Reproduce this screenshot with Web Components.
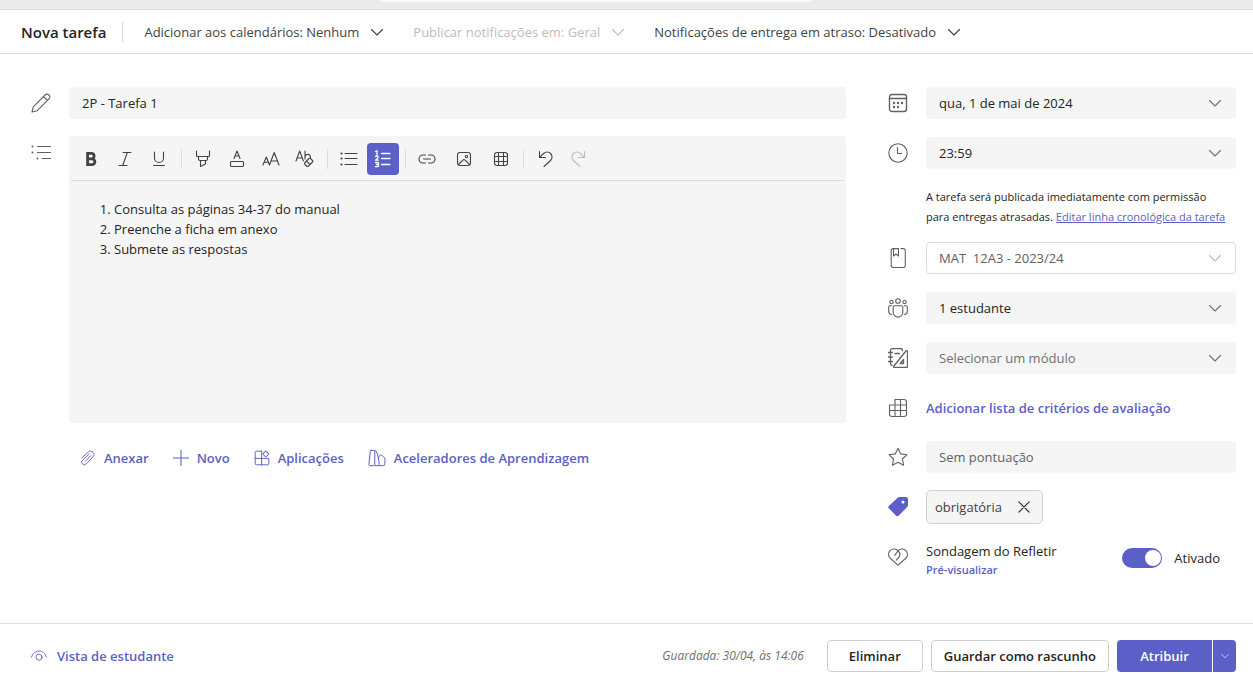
<!DOCTYPE html>
<html lang="pt">
<head>
<meta charset="utf-8">
<title>Nova tarefa</title>
<style>
  :root {
    --brand: #5b5fc7;
    --text: #242424;
    --text-2: #424242;
    --text-3: #616161;
    --disabled: #bdbdbd;
    --fill: #f5f5f5;
    --line: #dcdcdc;
    --font: "Open Sans", "Noto Sans", sans-serif;
  }
  body { margin: 0; background: #fff; color: var(--text); font: 13px/20px var(--font); }
</style>
</head>
<body>
<task-page></task-page>

<script>
const ICONS = {
  pencil: '<path d="M1 19l1.3-5.2L14.1 2a2.7 2.7 0 0 1 3.9 0 2.7 2.7 0 0 1 0 3.9L6.2 17.7z M12.6 3.5l3.9 3.9"/>',
  bullets: '<path d="M6.5 4.5h13M6.5 10.5h13M11 16.5h8.5"/><g fill="currentColor" stroke="none"><circle cx="1.5" cy="4.5" r="1"/><circle cx="1.5" cy="10.5" r="1"/><circle cx="6.5" cy="16.5" r="1"/></g>',
  calendar: '<rect x="1.5" y="1.5" width="17" height="17" rx="2.5" stroke-width="1.4"/><path d="M1.5 5.5h17" stroke-width="1.4"/><g fill="currentColor" stroke="none"><circle cx="6" cy="10" r="1.2"/><circle cx="10" cy="10" r="1.2"/><circle cx="14" cy="10" r="1.2"/><circle cx="6" cy="14" r="1.2"/><circle cx="10" cy="14" r="1.2"/></g>',
  clock: '<circle cx="10" cy="10" r="9.2"/><path d="M9.5 4.5v6h4"/>',
  book: '<path d="M5.5.6h-.3a2 2 0 0 0-2 2v14.9a2 2 0 0 0 2 2h10.1a2 2 0 0 0 2-2V2.6a2 2 0 0 0-2-2H13M5.5.6h5v7.4L8 6 5.500 8z"/>',
  people: '<circle cx="10" cy="3" r="2.3"/><circle cx="3.5" cy="4" r="1.7"/><circle cx="16.5" cy="4" r="1.7"/><path d="M6.2 7.8h7.6a1 1 0 0 1 1 1v5.5a4.8 4.8 0 0 1-9.6 0V8.8a1 1 0 0 1 1-1zM3.5 7.8H1.700a1 1 0 0 0-1 1v4.400a3.300 3.300 0 0 0 3 3.300M16.500 7.800h1.800a1 1 0 0 1 1 1v4.400a3.300 3.300 0 0 1-3 3.300"/>',
  module: '<path stroke-width="1.300" d="M14.500 2.700V2.500a2 2 0 0 0-2-2H4.500a2 2 0 0 0-2 2v13a2 2 0 0 0 1.500 1.900M.5 4.500h4M.5 9h4M.5 13.500h4M7 5.500h4.500M19.500 3.500v15a1 1 0 0 1-1 1h-12c-.9 0-1.200-.8-.6-1.500l12-15c.6-.6 1.600-.3 1.600.5zM15.500 11.500v4h-3.200z"/>',
  rubric: '<path d="M7 1.500h9a2.500 2.500 0 0 1 2.500 2.500v12a2.500 2.500 0 0 1-2.500 2.500H4A2.500 2.500 0 0 1 1.500 16V7h17M7 18.500v-17M12.500 1.500v17M1.500 12.500h17"/>',
  star: '<path d="M10 1.200l2.700 5.700 6.300.8-4.600 4.300 1.200 6.200-5.600-3-5.600 3 1.200-6.200L1 7.700l6.300-.8z"/>',
  tag: '<path fill="currentColor" stroke="none" fill-rule="evenodd" d="M11.500 0H18a2 2 0 0 1 2 2v6.300a2 2 0 0 1-.6 1.500l-8.600 8.600a2 2 0 0 1-2.900 0L1 11.600a2 2 0 0 1 0-2.900L10 .6a2 2 0 0 1 1.500-.6zM15 3.600a1.500 1.500 0 1 0 0 3 1.500 1.500 0 0 0 0-3z"/>',
  reflect: '<path d="M10.200 3.900C8.500 1.600 4.600 1.300 2.300 3.400A5.400 5.400 0 0 0 2 11l7.300 6.600a1 1 0 0 0 1.400 0L18 11a5.400 5.400 0 0 0-.4-7.700C15.300 1.300 11.700 1.700 9.800 4.200L6.700 8.300M10.200 3.900c2 2.100 2 4.900.4 6.700l-2.400 2.600"/>',
  chevron: '<path d="M4.500 7.500l5.500 5.500 5.500-5.500"/>',
  bold: '<path stroke-width="2.800" stroke-linejoin="miter" d="M6.600 4.400h3.800a2.700 2.700 0 0 1 0 5.400H6.600zM6.600 9.800h4.400a2.900 2.900 0 0 1 0 5.800H6.600z"/>',
  italic: '<path d="M8 3.500h8M4 16.500h8M12.300 3.500l-4.600 13"/>',
  underline: '<path d="M5.500 3v6a4.500 4.500 0 0 0 9 0V3M4.500 16.500h11"/>',
  highlight: '<path d="M3.500 2v4.500a1 1 0 0 0 1 1h11a1 1 0 0 0 1-1V2M5.500 7.500v2.500a1.500 1.500 0 0 0 1.500 1.500h6a1.500 1.500 0 0 0 1.500-1.500v-2.500M7.500 11.500v6l5-2.500v-3.500"/>',
  color: '<path d="M7 9.500l3-7.500 3 7.500M8 7h4"/><rect x="3.500" y="12.500" width="13" height="5" rx="1"/>',
  size: '<path d="M2 16l3.300-8 3.200 8M3.200 13.300h4.200M8.500 16l4.700-12.500L18 16M10 12h6.500"/>',
  clear: '<path d="M1 12L4.700 2l3.700 10M2.300 9h4.800M10 2v8M10 8a2.800 2.800 0 0 1 5-1.500c.4.600.5 1 .5 1.700M10 13.500l4-4a1 1 0 0 1 1.500 0l2 2a1 1 0 0 1 0 1.500l-4 4a1.500 1.500 0 0 1-2 0L10 15.500a1.400 1.400 0 0 1 0-2zM11.500 12l3.700 3.700"/>',
  list: '<path d="M6 4.500h12M6 9.500h12M6 15.500h12"/><g fill="currentColor" stroke="none"><circle cx="2.500" cy="4.500" r="1.100"/><circle cx="2.500" cy="9.500" r="1.100"/><circle cx="2.500" cy="15.500" r="1.100"/></g>',
  numbers: '<path d="M8.500 4.500H17M8.500 9.500H17M8.500 15.500H17" stroke-width="1.300"/><path stroke-width="1.300" d="M2.500 2.500l1.500-.8v4M2.500 7.500c.6-.8 2.700-.7 2.700.6 0 1-1.500 1.700-2.700 3h3M2.500 13.500h2.200c1.300 0 1.300 2 0 2H3.500M4.700 15.500c1.300 0 1.300 2.200 0 2.200H2.500"/>',
  link: '<path d="M8.500 6H6a4 4 0 0 0 0 8h2.500M11.500 6H14a4 4 0 0 1 0 8h-2.500M6.500 10h7"/>',
  image: '<rect x="3.500" y="3.500" width="13" height="13" rx="2.500"/><path d="M4.500 15.500l4.700-4.600a1.200 1.200 0 0 1 1.600 0l4.700 4.600"/><circle cx="12.500" cy="7.500" r="1.200"/>',
  table: '<rect x="3.500" y="3.500" width="13" height="13" rx="2.500"/><path d="M3.500 7.500h13M3.500 12.500h13M7.500 3.500v13M12.500 3.500v13"/>',
  undo: '<path d="M4.500 2.500v6h6M4.700 8.300l3.900-3.800a5 5 0 0 1 7 0 5 5 0 0 1 0 7L9 17.500"/>',
  redo: '<path d="M15.500 2.500v6h-6M15.300 8.300l-3.900-3.800a5 5 0 0 0-7 0 5 5 0 0 0 0 7l6.600 6"/>',
  clip: '<path d="M2 10l8.300-7.300a4 4 0 0 1 6 0 4 4 0 0 1 0 5.800l-8.600 9a3.200 3.200 0 0 1-4.600 0 3.200 3.200 0 0 1 0-4.600l8.500-8"/><path d="M13.500 7l-7 7.300"/>',
  plus: '<path d="M10 .5v19M.5 10h19" stroke-width="1.300"/>',
  apps: '<path d="M9.500 1.500H3A1.500 1.500 0 0 0 1.500 3v14A1.500 1.500 0 0 0 3 18.500h14a1.500 1.500 0 0 0 1.500-1.500v-6.500H1.500M9.500 1.500v17" stroke-width="1.200"/><rect x="12" y="2.200" width="5.500" height="5.500" rx="1" transform="rotate(45 14.750 4.950)" stroke-width="1.200"/>',
  learn: '<path d="M3.500 1.500h3a1 1 0 0 1 1 1v15a1 1 0 0 1-1 1H2a1 1 0 0 1-1-1.100l1.500-14.900a1 1 0 0 1 1-1zM7.500 2a1 1 0 0 1 1.400.2c2 3 3.100 9 3.500 15.200a1 1 0 0 1-1 1.100H8M12 18.500h5.500a1 1 0 0 0 1-1c.5-4 .5-6.500 0-7.600-.6-1.300-1.400-1.500-3.500-2.900a1.500 1.500 0 0 0-2.200.4c-.6 1-1 2.100-1.300 3.600"/>',
  eye: '<path d="M.6 11.500C2 6.700 5.500 3.800 10 3.800s8 2.900 9.400 7.700"/><circle cx="10" cy="11.500" r="3.800"/>',
  close: '<path d="M3.500 3.500l13 13M16.500 3.500l-13 13" stroke-width="1.400"/>'
};

function define(name, html, setup) {
  const tpl = document.createElement('template');
  tpl.innerHTML = '<style>*{box-sizing:border-box}button,input,select{font:inherit;color:inherit;margin:0}a{color:inherit}</style>' + html;
  customElements.define(name, class extends HTMLElement {
    connectedCallback() {
      if (this.shadowRoot) return;
      const root = this.attachShadow({ mode: 'open' });
      root.append(tpl.content.cloneNode(true));
      if (setup) setup(root, this);
    }
  });
}

define('ui-icon', `
<style>
  :host { display: block; flex: none; width: 20px; height: 20px; }
  :host([size="18"]) { width: 18px; height: 18px; }
  :host([size="16"]) { width: 16px; height: 16px; }
  :host([size="12"]) { width: 12px; height: 12px; }
  svg { display: block; width: 100%; height: 100%; fill: none; stroke: currentColor; stroke-width: 1.100; stroke-linecap: round; stroke-linejoin: round; }
</style>
<svg viewBox="0 0 20 20" aria-hidden="true"></svg>`,
(root, host) => { root.querySelector('svg').innerHTML = ICONS[host.getAttribute('name')]; });

define('menu-button', `
<style>
  :host { display: block; color: var(--text-2); }
  button { display: flex; align-items: center; gap: 8px; padding: 0; border: 0; background: none; height: 32px; white-space: nowrap; }
  button:disabled { color: var(--disabled); }
</style>
<button type="button" aria-haspopup="menu"><slot></slot><ui-icon name="chevron"></ui-icon></button>`,
(root, host) => { root.querySelector('button').disabled = host.hasAttribute('disabled'); });

define('task-header', `
<style>
  :host { display: flex; align-items: center; height: 43px; padding-left: 21px; border-bottom: 1px solid var(--line); }
  h1 { margin: 0; padding-right: 16px; border-right: 1px solid var(--line); font-size: 15px; line-height: 20px; font-weight: 600; white-space: nowrap; }
  nav { display: flex; gap: 26px; margin-left: 21px; }
</style>
<h1>Nova tarefa</h1>
<nav>
  <menu-button>Adicionar aos calendários: Nenhum</menu-button>
  <menu-button disabled>Publicar notificações em: Geral</menu-button>
  <menu-button>Notificações de entrega em atraso: Desativado</menu-button>
</nav>`);

define('form-row', `
<style>
  :host { display: grid; grid-template-columns: 20px minmax(0, 1fr); column-gap: 18px; align-items: center; }
  :host([top]) { align-items: start; }
  .icon { color: var(--text-3); }
  :host([accent]) .icon { color: var(--brand); }
  :host([top]) .icon { padding-top: 6px; }
</style>
<div class="icon"><ui-icon></ui-icon></div>
<slot></slot>`,
(root, host) => {
  const icon = document.createElement('ui-icon');
  icon.setAttribute('name', host.getAttribute('icon'));
  root.querySelector('ui-icon').replaceWith(icon);
});

define('text-field', `
<style>
  :host { display: grid; height: 32px; }
  input, ui-icon { grid-area: 1 / 1; }
  input { width: 100%; height: 32px; padding: 0 40px 0 13px; border: 0; border-radius: 4px; background: var(--fill); outline: 0; }
  input::placeholder { color: var(--text-3); opacity: 1; }
  ui-icon { place-self: center end; margin-right: 11px; color: #707070; pointer-events: none; }
  :host(:not([dropdown])) ui-icon { display: none; }
</style>
<input type="text"><ui-icon name="chevron"></ui-icon>`,
(root, host) => {
  const input = root.querySelector('input');
  input.value = host.getAttribute('value') || '';
  input.placeholder = host.getAttribute('placeholder') || '';
  input.setAttribute('aria-label', host.getAttribute('label'));
});

define('select-field', `
<style>
  :host { display: grid; height: 32px; }
  select, ui-icon { grid-area: 1 / 1; }
  select { appearance: none; width: 100%; height: 32px; padding: 0 40px 0 12px; border: 1px solid transparent; border-radius: 4px; background: var(--fill); outline: 0; }
  ui-icon { place-self: center end; margin-right: 11px; color: #707070; pointer-events: none; }
  :host([muted]) select { color: #707070; }
  select:disabled { background: #fff; border-color: var(--line); color: var(--text-3); opacity: 1; }
  select:disabled + ui-icon { color: var(--disabled); }
</style>
<select><option></option></select><ui-icon name="chevron"></ui-icon>`,
(root, host) => {
  const select = root.querySelector('select');
  select.options[0].textContent = host.getAttribute('value');
  select.setAttribute('aria-label', host.getAttribute('label'));
  select.disabled = host.hasAttribute('disabled');
});

define('tool-button', `
<style>
  :host { display: block; }
  button { display: grid; place-items: center; width: 32px; height: 32px; padding: 0; border: 0; border-radius: 4px; background: none; color: var(--text-2); }
  :host([pressed]) button { background: var(--brand); color: #fff; }
  button:disabled { color: var(--disabled); }
</style>
<button type="button"></button>`,
(root, host) => {
  const button = root.querySelector('button');
  button.setAttribute('aria-label', host.getAttribute('label'));
  button.disabled = host.hasAttribute('disabled');
  const icon = document.createElement('ui-icon');
  icon.setAttribute('name', host.getAttribute('icon'));
  button.append(icon);
});

define('text-editor', `
<style>
  :host { display: flex; flex-direction: column; min-height: 287px; border-radius: 4px; background: var(--fill); }
  .tools { display: flex; flex-wrap: wrap; align-items: center; gap: 2px; margin: 0 2px; padding: 7px 4px 5px; border-bottom: 1px solid var(--line); }
  .wide { display: flex; gap: 5px; }
  .sep { width: 8px; height: 20px; display: flex; justify-content: center; }
  .sep::before { content: ""; width: 1px; background: var(--line); }
  .body { flex: 1; padding: 18px 16px; outline: 0; }
  ol { margin: 0; padding-left: 29px; }
</style>
<div class="tools" role="toolbar" aria-label="Formatação">
  <tool-button icon="bold" label="Negrito"></tool-button>
  <tool-button icon="italic" label="Itálico"></tool-button>
  <tool-button icon="underline" label="Sublinhado"></tool-button>
  <span class="sep"></span>
  <tool-button icon="highlight" label="Realce"></tool-button>
  <tool-button icon="color" label="Cor do texto"></tool-button>
  <tool-button icon="size" label="Tamanho do texto"></tool-button>
  <tool-button icon="clear" label="Limpar formatação"></tool-button>
  <span class="sep"></span>
  <tool-button icon="list" label="Lista com marcas"></tool-button>
  <tool-button icon="numbers" label="Lista numerada" pressed></tool-button>
  <span class="sep"></span>
  <div class="wide">
    <tool-button icon="link" label="Ligação"></tool-button>
    <tool-button icon="image" label="Imagem"></tool-button>
    <tool-button icon="table" label="Tabela"></tool-button>
  </div>
  <span class="sep"></span>
  <tool-button icon="undo" label="Anular"></tool-button>
  <tool-button icon="redo" label="Refazer" disabled></tool-button>
</div>
<div class="body" contenteditable="true" role="textbox" aria-multiline="true" aria-label="Instruções" spellcheck="false">
  <ol><li>Consulta as páginas 34-37 do manual</li><li>Preenche a ficha em anexo</li><li>Submete as respostas</li></ol>
</div>`);

define('link-button', `
<style>
  :host { display: block; color: var(--brand); font-weight: 600; }
  button { display: flex; align-items: center; gap: 8px; padding: 0; border: 0; background: none; white-space: nowrap; }
  :host([small]) button { font-size: 11px; line-height: 18px; }
  :host([wide]) button { gap: 10px; }
</style>
<button type="button"><slot></slot></button>`,
(root, host) => {
  if (!host.hasAttribute('icon')) return;
  const icon = document.createElement('ui-icon');
  icon.setAttribute('name', host.getAttribute('icon'));
  icon.setAttribute('size', host.getAttribute('icon-size') || '16');
  root.querySelector('button').prepend(icon);
});

define('tag-chip', `
<style>
  :host { display: inline-flex; justify-self: start; align-items: center; gap: 14px; height: 34px; margin: -1px 0; padding: 0 10px 0 8px; border: 1px solid #d1d1d1; border-radius: 5px; background: var(--fill); color: var(--text-2); box-sizing: border-box; }
  button { padding: 0; border: 0; background: none; color: var(--text); }
</style>
<slot></slot><button type="button" aria-label="Remover"><ui-icon name="close" size="16"></ui-icon></button>`);

define('toggle-switch', `
<style>
  :host { display: flex; align-items: center; gap: 12px; height: 34px; }
  input { appearance: none; width: 40px; height: 20px; border-radius: 10px; background: #d1d1d1; }
  input:checked { background: var(--brand); }
  input::before { content: ""; display: block; width: 16px; height: 16px; margin: 2px; border-radius: 8px; background: #fff; }
  input:checked::before { margin-left: 23px; }
</style>
<input type="checkbox" role="switch" id="s" checked><label for="s"><slot></slot></label>`);

define('action-button', `
<style>
  :host { display: block; font-weight: 600; }
  button { height: 32px; min-width: 96px; padding: 0 12px; border: 1px solid #d1d1d1; border-radius: 4px; background: #fff; color: var(--text); white-space: nowrap; }
</style>
<button type="button"><slot></slot></button>`);

define('split-button', `
<style>
  :host { display: flex; gap: 1px; font-weight: 600; color: #fff; border-radius: 4px; overflow: hidden; }
  button { height: 32px; padding: 0; border: 0; background: var(--brand); }
  .main { width: 95px; }
  .more { display: grid; place-items: center; width: 23px; }
</style>
<button class="main" type="button"><slot></slot></button>
<button class="more" type="button" aria-label="Mais opções"><ui-icon name="chevron" size="12"></ui-icon></button>`);

define('task-footer', `
<style>
  :host { display: flex; align-items: center; gap: 8px; padding: 16px 17px 13px 31px; border-top: 1px solid var(--line); }
  .saved { margin-left: auto; padding-right: 15px; font-size: 12px; font-style: italic; color: #707070; }
</style>
<link-button icon="eye" wide>Vista de estudante</link-button>
<span class="saved">Guardada: 30/04, às 14:06</span>
<action-button>Eliminar</action-button>
<action-button>Guardar como rascunho</action-button>
<split-button>Atribuir</split-button>`);

define('task-content', `
<style>
  :host { display: flex; flex-direction: column; gap: 17px; min-width: 0; }
  .attach { display: flex; flex-wrap: wrap; gap: 24px; margin-left: 38px; padding: 8px 11px; }
</style>
<form-row icon="pencil"><text-field label="Título" value="2P - Tarefa 1"></text-field></form-row>
<form-row icon="bullets" top><text-editor></text-editor></form-row>
<div class="attach">
  <link-button icon="clip">Anexar</link-button>
  <link-button icon="plus">Novo</link-button>
  <link-button icon="apps">Aplicações</link-button>
  <link-button icon="learn" icon-size="18">Aceleradores de Aprendizagem</link-button>
</div>`);

define('task-settings', `
<style>
  :host { display: flex; flex-direction: column; gap: 18px; }
  p { margin: 0 0 -3px 38px; padding-right: 8px; font-size: 11px; line-height: 20px; }
  p a { color: var(--brand); }
  .link { min-height: 31px; }
  .tag { height: 32px; }
  .reflect { display: flex; justify-content: space-between; padding-right: 16px; }
</style>
<form-row icon="calendar"><text-field dropdown label="Data para conclusão" value="qua, 1 de mai de 2024"></text-field></form-row>
<form-row icon="clock"><text-field dropdown label="Hora para conclusão" value="23:59"></text-field></form-row>
<p>A tarefa será publicada imediatamente com permissão para entregas atrasadas. <a href="#">Editar linha cronológica da tarefa</a></p>
<form-row icon="book"><select-field label="Turma" value="MAT&nbsp; 12A3 - 2023/24" disabled></select-field></form-row>
<form-row icon="people"><select-field label="Atribuir a" value="1 estudante"></select-field></form-row>
<form-row icon="module"><select-field label="Módulo" value="Selecionar um módulo" muted></select-field></form-row>
<form-row icon="rubric" class="link"><link-button>Adicionar lista de critérios de avaliação</link-button></form-row>
<form-row icon="star"><text-field label="Pontos" placeholder="Sem pontuação"></text-field></form-row>
<form-row icon="tag" class="tag" accent><tag-chip>obrigatória</tag-chip></form-row>
<form-row icon="reflect" top>
  <div class="reflect">
    <div>Sondagem do Refletir<link-button small>Pré-visualizar</link-button></div>
    <toggle-switch>Ativado</toggle-switch>
  </div>
</form-row>`);

define('app-strip', `
<style>
  :host { display: flex; justify-content: center; height: 9px; padding-right: 61px; background: #ebebeb; border-bottom: 1px solid var(--line); }
  div { width: 432px; height: 2px; border-radius: 0 0 3px 3px; background: #fafafa; }
</style>
<div></div>`);

define('task-page', `
<style>
  :host { display: flex; flex-direction: column; min-height: 100vh; }
  main { flex: 1; display: grid; grid-template-columns: minmax(0, 1fr) 348px; column-gap: 42px; align-items: start; padding: 33px 17px 24px 31px; }
  app-strip, task-header { flex: none; box-sizing: content-box; }
</style>
<app-strip></app-strip>
<task-header></task-header>
<main>
  <task-content></task-content>
  <task-settings></task-settings>
</main>
<task-footer></task-footer>`);
</script>
</body>
</html>
